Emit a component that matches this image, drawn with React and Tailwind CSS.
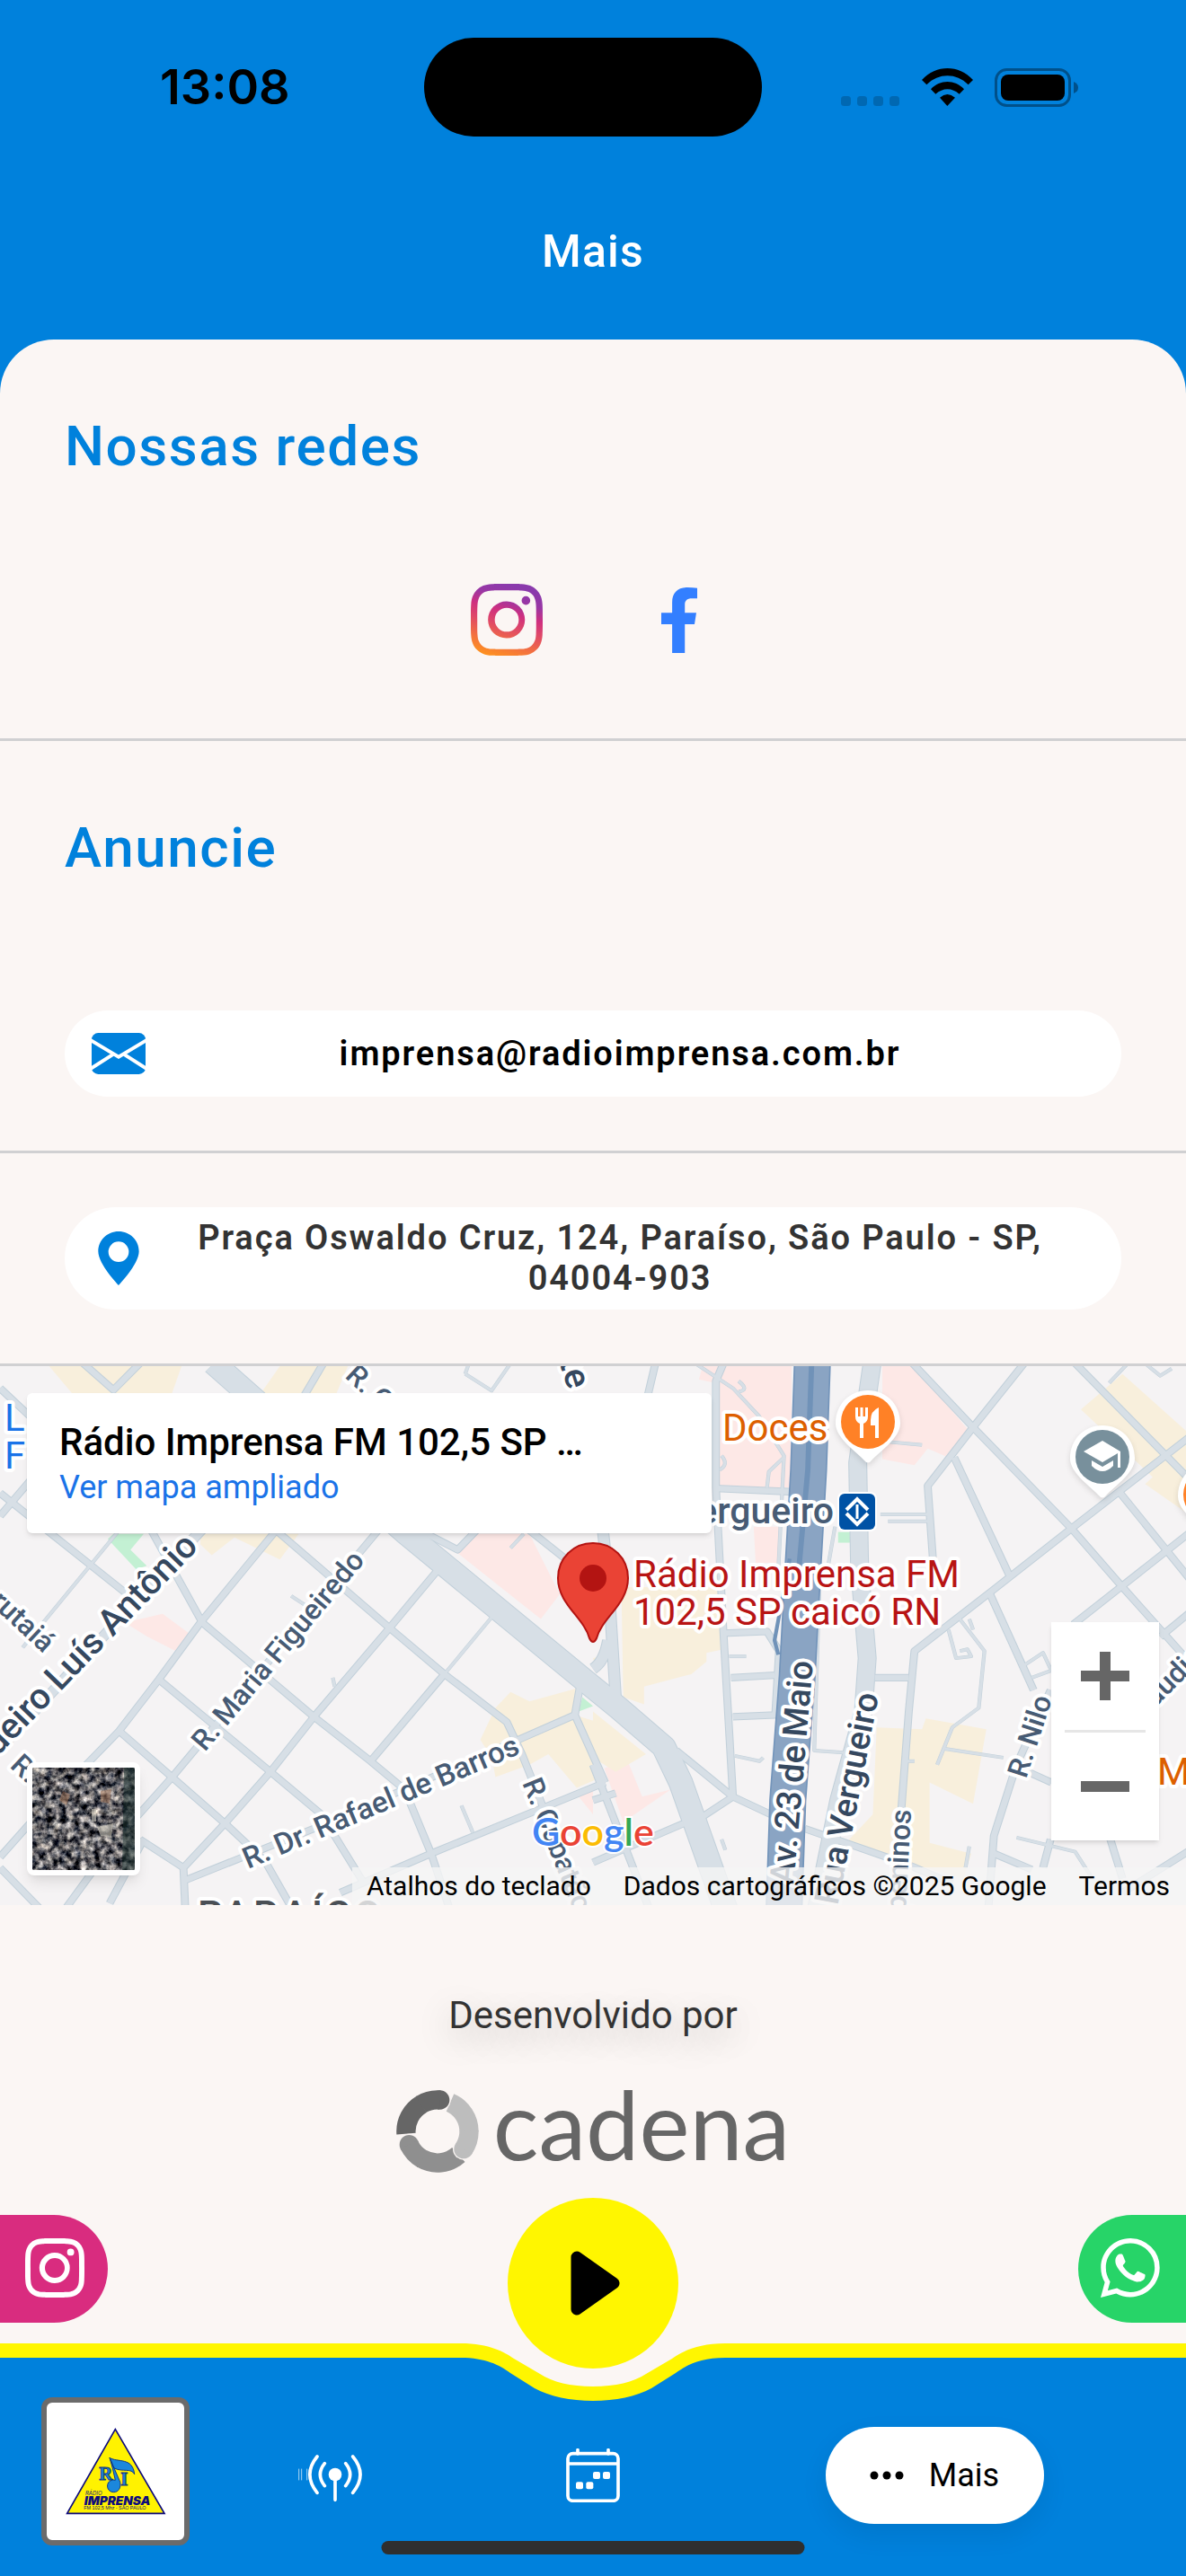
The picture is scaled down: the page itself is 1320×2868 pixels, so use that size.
import React from "react";
import { BsInstagram, BsWhatsapp } from "react-icons/bs";

function StatusBar() {
  return (
    <div className="grid h-[110px] grid-cols-[1fr_376px_1fr] items-center">
      <span className="pl-[178px] font-[Inter] text-[54px] leading-[64px] font-semibold text-black">13:08</span>
      <div className="h-[110px] rounded-full bg-black" />
      <div className="flex items-center justify-end gap-6 pr-[120px]">
        <svg className="h-[42px] w-[66px]" viewBox="0 0 66 42" fill="#0068b2" aria-hidden="true">
          {[0, 18, 36, 54].map((x) => (
            <rect key={x} x={x} y="31" width="11" height="11" rx="3.5" />
          ))}
        </svg>
        <svg className="h-[42px] w-[57px]" viewBox="0 0 171 126" aria-label="Wi-Fi">
          <path d="M0 39C48-13 123-13 171 39L155 55C115 15 56 15 16 55Z" />
          <path d="M30 70C60 37 111 37 141 70L125 86C101 64 70 64 46 86Z" />
          <path d="M60 98Q85 76 111 98L85 126Z" />
        </svg>
        <svg className="h-[43px] w-[93px]" viewBox="0 0 93 43" aria-label="Bateria">
          <rect x="1.5" y="1.5" width="82" height="40" rx="12" fill="none" stroke="#00508a" strokeWidth="3" />
          <rect x="7" y="7" width="71" height="29" rx="8" />
          <path d="M88 15Q93 17 93 21.500T88 28Z" fill="#00508a" />
        </svg>
      </div>
    </div>
  );
}

function FacebookIcon() {
  return (
    <svg className="h-[73px] w-10" viewBox="0 0 119 217" fill="#337fff" aria-hidden="true">
      <path d="M36 217V122H0V84H36V50C36 18 54 0 87 0Q104 0 119 2V36H102C84 36 78 44 78 57V84H116L110 122H78V217Z" />
    </svg>
  );
}

function MailIcon() {
  return (
    <svg className="h-[46px] w-[60px] shrink-0" viewBox="0 0 180 138" aria-hidden="true">
      <rect width="180" height="138" rx="22" fill="#0081dc" />
      <path d="M-4 24L90 80L184 24M-4 120L74 70M184 120L106 70" fill="none" stroke="#fff" strokeWidth="12" />
    </svg>
  );
}

function PinIcon() {
  return (
    <svg className="h-[60px] w-[60px] shrink-0" viewBox="0 0 180 180" aria-hidden="true">
      <path fillRule="evenodd" fill="#0081dc" d="M90 0C52 0 22 29 22 67C22 110 90 180 90 180S158 110 158 67C158 29 128 0 90 0ZM90 34A34 34 0 1 1 90 102A34 34 0 1 1 90 34Z" />
    </svg>
  );
}

const leftRoads = [
  "M0 385L360 690", "M400 490L535 750L830 1015L980 1140L1070 1220L1140 1400L1190 1560", "M420 910L590 1060L715 1170L850 1290L960 1480",
  "M315 1055L455 1185L600 1320L700 1420L775 1560", "M730 490L1030 765L1175 895L1340 1030L1380 1120L1440 1280L1530 1560",
  "M730 490L530 750L420 910L315 1055L100 1290L0 1410", "M1000 490L455 1185L300 1370L170 1560", "M1155 605L1030 765L830 1015L715 1170L595 1315L485 1440L490 1560",
  "M1175 895L980 1140", "M490 1475L830 1330L1100 1205L1370 1080L1520 1010L1535 920M1520 1010L1600 1200", "M900 1510L1140 1400L1600 1200",
  "M220 20L300 95L370 20", "M0 90L80 170", "M855 20L805 110", "M80 350L0 450", "M0 1440L110 1560", "M370 1360L485 1440", "M290 1540L380 1360", "M1110 490L1210 545L1260 490", "M1400 490L1530 600",
];
const leftThin = ["M1300 735L1175 895", "M400 380L60 820", "M770 675L820 710", "M880 905L885 930", "M1220 1265L1250 1340", "M1350 540L1385 500", "M1230 50L1300 97L1350 20", "M1230 50L1240 20"];
const rightRoads = [
  "M165 20L145 110", "M345 20L325 70L325 370L345 780L370 1240L270 1310", "M325 372L530 382", "M845 20L1005 200L1265 485L1400 650L1568 850", "M1140 20L1005 200L885 365L900 590",
  "M1275 20L1580 350", "M955 285L1100 615", "M1580 225L1265 485L1050 665L850 830L835 1000L815 1280L790 1560", "M1390 380L1580 630", "M1580 495L1270 755", "M1050 670L1165 940",
  "M1210 940L1120 1150L1060 1350L1045 1560", "M1150 1170L1212 1200", "M745 905L835 905", "M345 780L460 775L492 830L482 1010L370 1015", "M365 905L480 898", "M560 1330L830 1430L950 1485",
  "M220 1110L370 1240L470 1290", "M240 1315L120 1370L0 1425", "M0 1150L150 1560", "M1365 1350L1400 1470", "M1400 1510L1580 1390", "M1060 1400L1160 1445M1210 1360L1190 1440", "M1500 790L1580 720", "M0 1250L60 1230",
];
const rightThin = ["M270 20L370 90L440 170L505 280L490 600", "M340 280Q360 305 335 320M385 70Q415 95 385 100", "M505 285L465 325L460 370", "M770 240L870 250", "M760 445L890 445M780 465L890 465", "M970 740L1035 830L1020 990L950 1045L910 1150", "M930 1105L1085 1130",
  "M1120 1355L1275 1395L1320 1470", "M995 740L1005 770M940 770L960 850L1000 845L990 825L970 830", "M1140 870L1190 835L1212 885L1160 905", "M375 1125L440 1140L450 1130", "M360 845L405 845", "M995 1380L985 1440", "M600 600L585 1110L690 1118M640 480L620 600M340 1360L350 1390", "M1365 75L1410 25M1465 25L1500 55L1530 35", "M820 1140L850 1140"];

function Streets() {
  return (
    <g transform="scale(0.42092 0.3955) translate(0 -28)" strokeLinejoin="round">
      <g fill="#f8efdc">
        <path d="M130 28H480L455 104H190ZM740 28H920L890 104H690ZM530 500H790L740 572L620 510L560 560L530 530ZM1350 945L1400 972L1525 935L1520 1010L1580 1030V1190L1525 1215L1450 1120L1400 1150L1310 1185L1300 1130L1270 1080L1310 990Z" />
      </g>
      <path fill="#fde8e6" d="M1250 500H1400L1480 670L1430 740L1205 550ZM330 750L430 725L500 780L465 830L390 790ZM1530 1240L1568 1220V1290Z" />
      <path fill="#c3f0d3" d="M300 500H380L345 545L388 590L360 600L285 515ZM1530 1000L1540 960L1568 985Z" />
      <g transform="translate(1568 0)">
        <path fill="#fde8e6" d="M290 28H525V370H330L320 75L280 65ZM765 28H850L990 205L950 290L885 260L850 307L765 290ZM425 480H500L490 582H430ZM30 1160L90 1135L130 1240L205 1220L80 1312Z" />
        <path fill="#f8efdc" d="M75 650H340L345 825L300 835V860L260 895L135 930V980L80 960ZM1400 50L1568 210V440L1460 360L1480 340L1290 150ZM750 1045L870 1050L880 1020L1040 1050L1005 1260L890 1200V1370L1000 1400L980 1470L740 1400L660 1380L740 1290ZM0 1000L140 1120L60 1170L0 1130ZM0 850L40 840L10 890Z" />
        <path fill="#c3f0d3" d="M648 495H680V525H648Z" />
      </g>
      {[{ c: "#c2d0da", a: 0 }, { c: "#d7dfe6", a: -5 }].map(({ c, a }) => (
        <g key={c} fill="none" stroke={c}>
          <g strokeWidth={21 + a}>
            {leftRoads.map((d) => <path key={d} d={d} />)}
            <g transform="translate(1568 0)">{rightRoads.map((d) => <path key={d} d={d} />)}</g>
          </g>
          <g strokeWidth={10 + a / 2}>
            {leftThin.map((d) => <path key={d} d={d} />)}
            <g transform="translate(1568 0)">{rightThin.map((d) => <path key={d} d={d} />)}</g>
          </g>
          <path strokeWidth={30 + a} d="M540 480L0 1105" />
          <g transform="translate(1568 0)">
            <path strokeWidth={32 + a} d="M25 480L40 620L60 960M40 800Q30 860 0 880" />
            <path strokeWidth={50 + a} d="M738 20L700 300L705 600L725 850L715 1000L650 1250L590 1560" />
          </g>
          <path strokeWidth={66 + a} d="M565 20L1075 500L1560 925L1635 990L1755 1100L1800 1200L1920 1560" />
        </g>
      ))}
      <g fill="none" transform="translate(1568 0)">
        <path stroke="#7394ba" strokeWidth="98" d="M580 20L570 320L555 600L540 900L515 1250L505 1560" />
        <path stroke="#8aa4c3" strokeWidth="90" d="M580 20L570 320L555 600L540 900L515 1250L505 1560" />
        <path stroke="#7092b8" strokeWidth="14" d="M578 20L568 320L545 590" />
        <path stroke="#7092b8" strokeWidth="10" d="M520 570L480 800L490 840" />
      </g>
    </g>
  );
}

function PoiPin({ x, y, color, children }) {
  return (
    <g transform={`translate(${x} ${y})`}>
      <path d="M-36 2C-36-20-20-35 0-35S36-20 36 2C36 18 12 34 4 43Q0 48-4 43C-12 34-36 18-36 2Z" fill="#fff" className="drop-shadow-md" />
      <circle r="30" fill={color} />
      {children}
    </g>
  );
}

function MapDrawing() {
  return (
    <svg className="absolute inset-0 h-full w-full font-[Roboto]" viewBox="0 0 1320 600" preserveAspectRatio="xMidYMid slice" role="img" aria-label="Mapa da região do Paraíso">
      <rect width="1320" height="600" fill="#f5f3f4" />
      <Streets />
      <g paintOrder="stroke" stroke="#fff" strokeWidth="8" strokeLinejoin="round" fontWeight="500" fill="#475b74">
        <text fontSize="32" transform="translate(228 430) rotate(-50)">R. Maria Figueiredo</text>
        <text fontSize="33" transform="translate(276 560) rotate(-23)">R. Dr. Rafael de Barros</text>
        <text fontSize="32" transform="translate(1142 460) rotate(-72)">R. Nilo</text>
        <text fontSize="32" transform="translate(-12 264) rotate(43)">rutaiá</text>
        <text fontSize="32" transform="translate(10 446) rotate(43)">R.</text>
        <text fontSize="32" transform="translate(383 12) rotate(43)">R. C</text>
        <text fontSize="32" transform="translate(581 464) rotate(68)">R. Cubatão</text>
        <text fontSize="32" textAnchor="end" transform="translate(1014 494) rotate(-87)">R. Apeninos</text>
        <text fontSize="32" transform="translate(1280 386) rotate(-45)">láudio</text>
        <g fill="#35485f" fontSize="40">
          <text textAnchor="end" transform="translate(222 202) rotate(-46)">Brigadeiro Luís Antônio</text>
          <text fontSize="38" textAnchor="end" transform="translate(905 329) rotate(-85)">Av. 23 de Maio</text>
          <text fontSize="38" textAnchor="end" transform="translate(978 366) rotate(-79)">Rua Vergueiro</text>
          <text transform="translate(622 -6) rotate(72)">te</text>
        </g>
        <text fontSize="44" x="220" y="627" letterSpacing="4" fill="#4a4f55">PARAÍSO</text>
        <text fontSize="41" textAnchor="end" x="928" y="175">Vergueiro</text>
        <g fontWeight="400" fontSize="42">
          <text x="5" y="72" fill="#1a73e8">L</text>
          <text x="5" y="114" fill="#1a73e8">F</text>
          <text x="804" y="83" fill="#dd5f00">Doces</text>
          <text x="1288" y="466" fill="#dd5f00">M</text>
          <text x="705" y="246" fill="#b81414">Rádio Imprensa FM</text>
          <text x="705" y="288" fill="#b81414">102,5 SP caicó RN</text>
        </g>
      </g>
      <g transform="translate(934 142)">
        <rect x="-2" y="-2" width="44" height="44" rx="7" fill="#fff" />
        <rect width="40" height="40" rx="6" fill="#0052a5" />
        <path d="M8 18L20 6L32 18M8 22L20 34L32 22" fill="none" stroke="#fff" strokeWidth="4" />
        <path d="M20 12V28" stroke="#fff" strokeWidth="3" />
      </g>
      <PoiPin x={966} y={62} color="#ff8126">
        <path d="M-14-16V-6Q-14 0-9 2V18H-5V2Q0 0 0-6V-16H-3V-6H-5.500V-16H-8.500V-6H-11V-16ZM12-16Q3-12 3-2V4H8V18H12Z" fill="#fff" />
      </PoiPin>
      <PoiPin x={1227} y={101} color="#78909c">
        <path d="M0-18L-21-6L0 6L17-4V12H20V-6ZM-12 4V10Q0 22 12 10V4L0 11Z" fill="#fff" />
      </PoiPin>
      <PoiPin x={1347} y={143} color="#ff8126" />
      <path d="M660 197C638 197 621 214 621 236C621 265 650 280 656 303Q660 311 664 303C670 280 699 265 699 236C699 214 682 197 660 197Z" fill="#ea4335" stroke="#b31412" strokeWidth="2" />
      <circle cx="660" cy="236" r="15" fill="#b31412" />
      <text x="592" y="534" fontFamily="Lato" fontSize="43" fontWeight="600" paintOrder="stroke" stroke="#fff" strokeWidth="4">
        <tspan fill="#4285f4">G</tspan><tspan fill="#ea4335">o</tspan><tspan fill="#fbbc04">o</tspan><tspan fill="#4285f4">g</tspan><tspan fill="#34a853">l</tspan><tspan fill="#ea4335">e</tspan>
      </text>
    </svg>
  );
}

function MapPanel() {
  return (
    <section aria-label="Mapa" className="relative h-[600px] overflow-hidden">
      <MapDrawing />
      <div className="absolute top-[30px] left-[30px] w-[762px] rounded-md bg-white px-9 pt-[29px] pb-[27px] shadow-md">
        <div className="text-[42px] leading-[52px] font-medium text-black">Rádio Imprensa FM 102,5 SP …</div>
        <a href="#mapa" className="block text-[36px] leading-[48px] text-[#1a73e8]">Ver mapa ampliado</a>
      </div>
      <button aria-label="Imagens de satélite" className="absolute bottom-[33px] left-[30px] h-[126px] w-[126px] overflow-hidden rounded-lg border-[6px] border-white bg-[#3c4443] shadow-lg">
        <svg className="block h-full w-full" viewBox="0 0 114 114" aria-hidden="true">
          <filter id="aerial" x="0" y="0" width="100%" height="100%" colorInterpolationFilters="sRGB">
            <feTurbulence type="fractalNoise" baseFrequency="0.13" numOctaves="4" seed="8" />
            <feColorMatrix values="1.7 0.2 0 0 -0.56  1.6 0.25 0 0 -0.54  1.45 0.3 0.05 0 -0.5  0 0 0 0 1" />
          </filter>
          <rect width="114" height="114" filter="url(#aerial)" />
          <path d="M102 0L100 114H114V0Z" fill="#1e3231" opacity="0.6" />
          <path d="M34 26L42 30L38 42L30 36ZM76 26L88 24L86 40L76 38Z" fill="#a97a5c" opacity="0.5" />
          <path d="M66 46H71V60H66ZM72 66L90 62L88 78L76 76Z" fill="#d7d2c4" opacity="0.6" />
        </svg>
      </button>
      <div className="absolute right-[30px] bottom-[72px] flex w-[120px] flex-col items-center bg-white shadow-md">
        <button aria-label="Aumentar zoom" className="grid h-[120px] w-full place-items-center">
          <svg className="h-[54px] w-[54px]" viewBox="0 0 54 54"><path d="M0 27H54M27 0V54" stroke="#666" strokeWidth="12" /></svg>
        </button>
        <div className="h-[3px] w-[90px] bg-[#e6e6e6]" />
        <button aria-label="Diminuir zoom" className="grid h-[120px] w-full place-items-center">
          <svg className="h-[54px] w-[54px]" viewBox="0 0 54 54"><path d="M0 27H54" stroke="#666" strokeWidth="12" /></svg>
        </button>
      </div>
      <div className="absolute right-0 bottom-0 flex h-[42px] items-center gap-9 bg-[#f5f5f5]/80 pr-[18px] pl-4 text-[30px] leading-[42px] text-black">
        <button>Atalhos do teclado</button>
        <span>Dados cartográficos ©2025 Google</span>
        <a href="#termos">Termos</a>
      </div>
    </section>
  );
}

function CadenaLogo() {
  return (
    <a href="#cadena" aria-label="cadena" className="mt-[58px] flex h-[94px] items-center gap-4">
      <svg className="h-[92px] w-[92px]" viewBox="0 0 276 276" fill="none" strokeWidth="64" aria-hidden="true">
        <path d="M180 42A105 105 0 0 1 243 138" stroke="#bdbdbd" />
        <path d="M85 229A105 105 0 0 0 208 216" stroke="#8f8f8f" />
        <path d="M85 47A105 105 0 0 0 33 146" stroke="#666" />
        <circle cx="225" cy="197" r="36" fill="#fbf6f4" />
        <circle cx="225" cy="197" r="32" fill="#bdbdbd" />
        <path d="M243 136A105 105 0 0 1 225 197" stroke="#bdbdbd" />
        <circle cx="43" cy="182" r="36" fill="#fbf6f4" />
        <circle cx="43" cy="182" r="32" fill="#8f8f8f" />
        <path d="M43 182A105 105 0 0 0 87 230" stroke="#8f8f8f" />
        <circle cx="146" cy="33" r="36" fill="#fbf6f4" />
        <circle cx="146" cy="33" r="32" fill="#666" />
        <path d="M146 33A105 105 0 0 0 83 48" stroke="#666" />
      </svg>
      <span className="pb-[18px] font-[Lato] text-[106px] leading-[76px] text-[#666]">cadena</span>
    </a>
  );
}

function StationLogo() {
  return (
    <svg className="block h-full w-full" viewBox="63 45 459 459" role="img" aria-label="Rádio Imprensa">
      <path d="M292 134L131 415H456Z" fill="#fff200" stroke="#0d0b7c" strokeWidth="5" />
      <g fill="#1b87dc" stroke="#123a80" strokeWidth="3">
        <text x="238" y="302" fontFamily="Liberation Serif" fontWeight="700" fontSize="62">R</text>
        <text x="310" y="322" fontFamily="Liberation Serif" fontWeight="700" fontSize="62">I</text>
        <path d="M273 229L308 310C312 330 302 344 287 344C272 344 264 332 266 320C268 307 280 301 292 304L283 264ZM273 229C300 246 350 226 356 284C345 262 318 278 288 264Z" />
      </g>
      <g fill="#0d0b7c" fontFamily="Inter">
        <text x="192" y="353" fontSize="18" fontStyle="italic">RÁDIO</text>
        <text x="188" y="387" fontSize="41" fontStyle="italic" fontWeight="900">IMPRENSA</text>
        <text x="187" y="403" fontSize="16" fontFamily="Liberation Sans">FM 102,5 Mhz - SÃO PAULO</text>
      </g>
    </svg>
  );
}

function BottomBar() {
  return (
    <footer className="relative bg-[#fbf6f4]">
      <div className="flex h-[162px] justify-between pt-[19px]">
        <a href="#instagram" aria-label="Instagram" className="flex h-[120px] w-[120px] items-center rounded-r-full bg-[#d92c7f] pb-[2px] pl-7 text-white">
          <BsInstagram className="h-[66px] w-[66px]" />
        </a>
        <a href="#whatsapp" aria-label="WhatsApp" className="flex h-[120px] w-[120px] items-center rounded-l-full bg-[#27d468] pb-[2px] pl-[25px] text-white">
          <BsWhatsapp className="h-[66px] w-[66px]" />
        </a>
      </div>
      <div className="flex h-16">
        <div className="flex-1 border-t-[16px] border-[#fff600] bg-[#0081dc]" />
        <svg className="h-16 w-[320px]" viewBox="0 0 320 64" aria-hidden="true">
          <path d="M0 0H13C45 0 62 10 72 17L101 34C115 43 135 48 160 48S205 43 219 34L248 17C258 10 275 0 307 0H320V64H0Z" fill="#fff600" />
          <path d="M0 16H13C40 16 56 24 68 33L95 50C112 59 135 64 160 64S208 59 225 50L252 33C264 24 280 16 307 16H320V64H0Z" fill="#0081dc" />
        </svg>
        <div className="flex-1 border-t-[16px] border-[#fff600] bg-[#0081dc]" />
      </div>
      <nav className="bg-[#0081dc] pb-[34px]" aria-label="Principal">
        <div className="-mt-1 grid grid-cols-[256fr_234fr_340fr_420fr_70fr] items-center justify-items-center">
          <button aria-label="Rádio Imprensa" className="h-[165px] w-[165px] overflow-hidden rounded-xl border-[6px] border-[#6b6b6b] bg-white">
            <StationLogo />
          </button>
          <button aria-label="Ao vivo" className="pt-[16px]">
            <svg className="h-[54px] w-[84px]" viewBox="33 72 252 162" fill="none" stroke="#fff" strokeWidth="11" strokeLinecap="round">
              <circle cx="159" cy="138" r="22" fill="#fff" stroke="none" />
              <path d="M159 150V223M124 101Q94 138 124 176M99 78Q50 138 99 199M194 101Q224 138 194 176M218 78Q268 138 218 199" />
              <path d="M38 120V156M47 120V156M65 120V156" strokeWidth="2" />
            </svg>
          </button>
          <button aria-label="Programação" className="pt-[8px]">
            <svg className="h-[60px] w-[60px]" viewBox="930 48 180 180" fill="none" stroke="#fff" strokeWidth="11">
              <rect x="936" y="65" width="168" height="158" rx="17" />
              <path d="M936 99H1104" />
              <path d="M969 53V66M1071 53V66" strokeLinecap="round" />
              <g fill="#fff" stroke="none">
                <rect x="1020" y="126" width="24" height="24" rx="6" />
                <rect x="1053" y="126" width="24" height="24" rx="6" />
                <rect x="963" y="160" width="24" height="24" rx="6" />
                <rect x="997" y="160" width="24" height="24" rx="6" />
              </g>
            </svg>
          </button>
          <button aria-current="page" className="mt-[9px] flex h-[108px] w-[243px] items-center justify-center gap-[28px] rounded-full bg-white text-[36px] leading-[42px] text-black shadow-[0_12px_30px_rgba(0,0,0,0.08)]">
            <svg className="h-[10px] w-[38px]" viewBox="0 0 38 10" aria-hidden="true">
              <circle cx="5" cy="5" r="4.500" /><circle cx="19" cy="5" r="4.500" /><circle cx="33" cy="5" r="4.500" />
            </svg>
            Mais
          </button>
        </div>
      </nav>
      <button aria-label="Tocar" className="absolute top-0 left-1/2 grid h-[190px] w-[190px] -translate-x-1/2 place-items-center rounded-full bg-[#fff600]">
        <svg className="h-[72px] w-[60px]" viewBox="0 0 60 72" aria-hidden="true">
          <path d="M12 7L53 36L12 65Z" stroke="#000" strokeWidth="13" strokeLinejoin="round" />
        </svg>
      </button>
      <div className="absolute bottom-6 left-1/2 h-[15px] w-[471px] -translate-x-1/2 rounded-full bg-[#2f2f2f]" />
    </footer>
  );
}

export default function App() {
  return (
    <div className="flex min-h-screen flex-col bg-[#0081dc] font-[Roboto,sans-serif]">
      <header className="pt-[42px] pb-[68px]">
        <StatusBar />
        <h1 className="mt-[98px] text-center text-[50px] leading-[60px] font-medium tracking-wide text-white">Mais</h1>
      </header>
      <main className="flex-1 rounded-t-[60px] bg-[#fbf6f4]">
        <section className="border-b-[3px] border-[#d0d0d2] px-[72px] pt-[83px] pb-[84px]">
          <h2 className="text-[62px] leading-[72px] font-medium tracking-wide text-[#0081dc]">Nossas redes</h2>
          <svg className="absolute h-0 w-0" aria-hidden="true">
            <linearGradient id="insta" x1="0.2" y1="1" x2="0.5" y2="0">
              <stop offset="0" stopColor="#ff941c" />
              <stop offset="0.22" stopColor="#f3713f" />
              <stop offset="0.45" stopColor="#e04a66" />
              <stop offset="0.64" stopColor="#cf2f7f" />
              <stop offset="0.82" stopColor="#9936a4" />
              <stop offset="1" stopColor="#8a3aac" />
            </linearGradient>
          </svg>
          <div className="mt-[109px] flex justify-center gap-24">
            <a href="#instagram" aria-label="Instagram" className="grid h-24 w-24 place-items-center">
              <BsInstagram className="h-20 w-20" fill="url(#insta)" />
            </a>
            <a href="#facebook" aria-label="Facebook" className="grid h-24 w-24 place-items-center">
              <FacebookIcon />
            </a>
          </div>
        </section>
        <section className="border-b-[3px] border-[#d0d0d2] px-[72px] pt-[83px] pb-[60px]">
          <h2 className="text-[62px] leading-[72px] font-medium tracking-wide text-[#0081dc]">Anuncie</h2>
          <a href="mailto:imprensa@radioimprensa.com.br" className="mt-[145px] flex min-h-24 items-center rounded-[48px] bg-white px-[30px] text-black">
            <MailIcon />
            <span className="flex-1 text-center text-[38px] leading-[45px] font-semibold tracking-wider">imprensa@radioimprensa.com.br</span>
          </a>
        </section>
        <section className="border-b-[3px] border-[#d0d0d2] px-[72px] py-[60px]">
          <address className="flex items-center rounded-[57px] bg-white px-[30px] py-3 text-[#333] not-italic">
            <PinIcon />
            <span className="flex-1 px-[36px] text-center text-[38px] leading-[45px] font-semibold tracking-wider">
              Praça Oswaldo Cruz, 124, Paraíso, São Paulo - SP, 04004-903
            </span>
          </address>
        </section>
        <MapPanel />
        <section className="flex flex-col items-center pt-[99px] pb-[27px]">
          <p className="text-[42px] leading-[48px] text-[#333] [text-shadow:0_12px_36px_rgba(0,0,0,0.25)]">Desenvolvido por</p>
          <CadenaLogo />
        </section>
      </main>
      <BottomBar />
    </div>
  );
}
